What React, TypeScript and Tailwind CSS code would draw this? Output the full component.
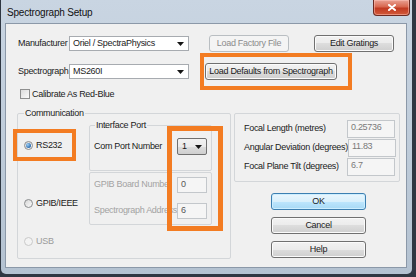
import React from 'react';
import clsx from 'clsx';

const Caret: React.FC = () => (
  <svg width="7" height="4" viewBox="0 0 7 4" className="shrink-0">
    <path d="M0 0h7L3.5 4z" fill="#151515" />
  </svg>
);

const Combo: React.FC<{ value: string; className: string }> = ({ value, className }) => (
  <div className={clsx('flex items-center justify-between border border-[#a7abb0] bg-white pl-[3px] pr-[4px]', className)}>
    <span className="leading-[11px]">{value}</span>
    <Caret />
  </div>
);

const Btn: React.FC<{ children: React.ReactNode; className?: string; disabled?: boolean; primary?: boolean }> = ({
  children,
  className,
  disabled,
  primary,
}) => (
  <div
    className={clsx(
      'flex h-[17px] items-center justify-center rounded-[3px] border leading-[11px]',
      disabled && 'border-[#b9bec2] bg-[#f4f4f4] text-[#8c8c8c]',
      primary &&
        'border-[#3c7fb1] bg-[linear-gradient(#eaf6fd,#d9f0fc_50%,#bee6fd_50%,#a7d9f5)] shadow-[inset_0_0_0_1px_#cdeeff]',
      !disabled &&
        !primary &&
        'border-[#707070] bg-[linear-gradient(#f2f2f2,#ebebeb_50%,#dddddd_50%,#cfcfcf)] shadow-[inset_0_0_0_1px_#fbfbfb]',
      className,
    )}
  >
    {children}
  </div>
);

const Field: React.FC<{ value: string; className: string }> = ({ value, className }) => (
  <div className={clsx('flex shrink-0 items-start border border-[#c3c7cb] bg-[#f5f5f5] pl-[3px] pt-[1px] leading-[11px]', className)}>
    {value}
  </div>
);

const Radio: React.FC<{ label: string; checked?: boolean; disabled?: boolean; className: string }> = ({
  label,
  checked,
  disabled,
  className,
}) => (
  <div className={clsx('flex h-[11px] items-center', className)}>
    <div
      className={clsx(
        'flex h-[9px] w-[9px] items-center justify-center rounded-full border',
        disabled ? 'border-[#c9c9c9] bg-[#f3f3f3]' : 'border-[#8a8c8e] bg-linear-to-br from-[#d6d6d6] to-[#fbfbfb]',
      )}
    >
      {checked && <div className="h-[5px] w-[5px] rounded-full bg-[radial-gradient(circle_at_35%_35%,#9fd0f5,#2b6cb0_70%,#1d4f8a)]" />}
    </div>
    <span className={clsx('ml-[3px] leading-[11px]', disabled && 'text-[#9b9b9b]')}>{label}</span>
  </div>
);

const GroupLabel: React.FC<{ text: string; className: string }> = ({ text, className }) => (
  <span className={clsx('absolute -top-[6px] bg-[#f0f0f0] px-[1px] leading-[11px]', className)}>{text}</span>
);

const FocalRow: React.FC<{ label: string; value: string }> = ({ label, value }) => (
  <div className="flex h-[18px] items-center justify-between">
    <span className="whitespace-nowrap">{label}</span>
    <Field value={value} className="h-[18px] w-[48px] text-[#7a7a7a]" />
  </div>
);

export default function App() {
  return (
    <div className="relative h-[277px] w-[416px] overflow-hidden bg-[#2f3742] font-['Liberation_Sans',Arial,sans-serif] text-[9px] tracking-[-0.3px] text-[#1b1b1b]">
      {/* window frame */}
      <div className="ml-[1px] flex h-[274px] w-[411px] flex-col rounded-b-[5px] bg-linear-to-b from-[#c9d5e2] via-[#bfccda] to-[#b4c2d1] pb-[6px] pl-[4px] pr-[5px]">
        <div className="flex h-[23px] items-start justify-between">
          <span className="mt-[7px] pl-[2px] text-[10px] leading-[12px] tracking-[-0.2px] text-[#111]">Spectrograph Setup</span>
          <div className="-mr-[3px] flex h-[16px] w-[37px] items-center justify-center rounded-b-[4px] border border-t-0 border-[#6b2a22] bg-[linear-gradient(#e9a193,#d8674f_45%,#c13a22_55%,#d25a3a)] shadow-[inset_0_0_0_1px_rgba(255,200,190,0.5)]">
            <svg width="8" height="7" viewBox="0 0 8 7">
              <path d="M1 1l6 5M7 1l-6 5" stroke="#fff" strokeWidth="2" strokeLinecap="round" />
            </svg>
          </div>
        </div>

        {/* client area */}
        <div className="flex-1 border border-[#8b98a8] bg-[#f0f0f0] pl-[11px] pt-[11px]">
          <div className="flex h-[17px] items-center">
            <span className="w-[52px] pl-[1px]">Manufacturer</span>
            <Combo value="Oriel / SpectraPhysics" className="h-[15px] w-[120px]" />
            <Btn disabled className="ml-[20px] w-[80px]">
              Load Factory File
            </Btn>
            <Btn className="ml-[25px] w-[80px]">Edit Gratings</Btn>
          </div>

          <div className="mt-[11px] flex h-[17px] items-center">
            <span className="w-[52px] pl-[1px]">Spectrograph</span>
            <Combo value="MS260I" className="h-[15px] w-[120px]" />
            <Btn className="ml-[16px] w-[132px]">Load Defaults from Spectrograph</Btn>
          </div>

          <div className="mt-[8px] flex h-[12px] items-center">
            <div className="ml-[3px] h-[10px] w-[10px] border border-[#8e8f8f] bg-linear-to-br from-[#dcdcdc] to-[#fbfbfb]" />
            <span className="ml-[2px] leading-[11px]">Calibrate As Red-Blue</span>
          </div>

          <div className="mt-[13px] flex items-start">
            {/* Communication */}
            <div className="relative flex h-[146px] w-[214px] rounded-[2px] border border-[#d3d6d9]">
              <GroupLabel text="Communication" className="left-[6px]" />
              <div className="flex w-[71px] flex-col pl-[6px]">
                <Radio label="RS232" checked className="mt-[26px]" />
                <Radio label="GPIB/IEEE" className="mt-[47px]" />
                <Radio label="USB" disabled className="mt-[27px]" />
              </div>
              <div className="flex flex-col pt-[11px]">
                <div className="relative h-[46px] w-[123px] rounded-[2px] border border-[#d3d6d9]">
                  <GroupLabel text="Interface Port" className="left-[5px]" />
                  <div className="mt-[12px] flex h-[17px] items-center pl-[4px]">
                    <span className="w-[83px]">Com Port Number</span>
                    <div className="flex h-[17px] w-[30px] items-center justify-between rounded-[2px] border border-[#707070] bg-[linear-gradient(#f2f2f2,#ebebeb_50%,#dddddd_50%,#cfcfcf)] pl-[4px] pr-[4px]">
                      <span className="leading-[11px]">1</span>
                      <Caret />
                    </div>
                  </div>
                </div>
                <div className="mt-[1px] h-[53px] w-[123px] rounded-[2px] border border-[#d3d6d9] pl-[4px]">
                  <div className="mt-[4px] flex h-[16px] items-center">
                    <span className="w-[83px] overflow-hidden whitespace-nowrap text-[#a3a3a3]">GPIB Board Number</span>
                    <Field value="0" className="h-[16px] w-[30px] text-[#555]" />
                  </div>
                  <div className="mt-[10px] flex h-[16px] items-center">
                    <span className="w-[83px] overflow-hidden whitespace-nowrap text-[#a3a3a3]">Spectrograph Address</span>
                    <Field value="6" className="h-[16px] w-[30px] text-[#555]" />
                  </div>
                </div>
              </div>
            </div>

            {/* focal / buttons */}
            <div className="ml-[3px] flex flex-col">
              <div className="flex h-[69px] w-[166px] flex-col gap-[1px] rounded-[2px] border border-[#d3d6d9] pl-[9px] pr-[4px] pt-[6px]">
                <FocalRow label="Focal Length (metres)" value="0.25736" />
                <FocalRow label="Angular Deviation (degrees)" value="11.83" />
                <FocalRow label="Focal Plane Tilt (degrees)" value="6.7" />
              </div>
              <div className="ml-[37px] mt-[11px] flex w-[95px] flex-col gap-[7px]">
                <Btn primary>OK</Btn>
                <Btn>Cancel</Btn>
                <Btn>Help</Btn>
              </div>
            </div>
          </div>
        </div>
      </div>

      {/* orange annotation boxes */}
      <div className="absolute left-[200px] top-[53px] h-[37px] w-[152px] border-[4px] border-[#f37c22]" />
      <div className="absolute left-[13px] top-[129px] h-[32px] w-[63px] border-[4px] border-[#f37c22]" />
      <div className="absolute left-[167px] top-[126px] h-[105px] w-[56px] border-[5px] border-[#f37c22]" />
    </div>
  );
}
